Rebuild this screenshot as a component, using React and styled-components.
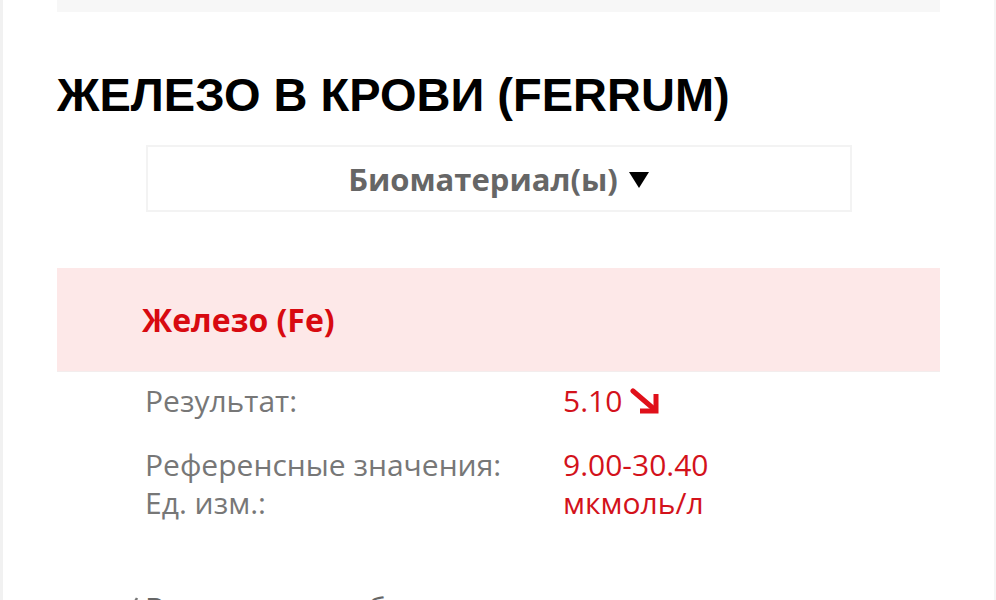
import React from 'react';
import styled, { createGlobalStyle } from 'styled-components';

const GlobalStyle = createGlobalStyle`
  html, body {
    margin: 0;
    padding: 0;
    background: #fff;
  }
  body {
    font-family: 'Open Sans', 'Noto Sans', sans-serif;
  }
`;

const Page = styled.div`
  width: 996px;
  height: 600px;
  box-sizing: border-box;
  overflow: hidden;
  border-left: 3px solid #f1f1f1;
  border-right: 2px solid #f5f5f5;
  padding: 0 54px 0 54px;
`;

const TopBand = styled.div`
  height: 12px;
  background: #f7f7f7;
`;

const Title = styled.h1`
  margin: 55px 0 0;
  font-family: 'Liberation Sans', Arial, sans-serif;
  font-weight: 700;
  font-size: 47px;
  line-height: 56px;
  color: #000;
  white-space: nowrap;
`;

const Dropdown = styled.div`
  width: 706px;
  height: 67px;
  box-sizing: border-box;
  margin: 22px auto 0;
  border: 2px solid #f3f3f3;
  display: flex;
  align-items: center;
  justify-content: center;
  gap: 11px;
  font-weight: 700;
  font-size: 31px;
  color: #666;
`;

const Caret = styled.span`
  width: 0;
  height: 0;
  border-left: 10px solid transparent;
  border-right: 10px solid transparent;
  border-top: 16px solid #000;
  margin-top: 2px;
`;

const TestHeader = styled.div`
  margin-top: 56px;
  height: 104px;
  box-sizing: border-box;
  background: #fde8e8;
  border-bottom: 1px solid #f3eded;
  display: flex;
  align-items: center;
  padding-left: 85px;
  font-weight: 700;
  font-size: 32px;
  color: #d80a10;
`;

const Results = styled.div`
  padding: 10px 0 0 88px;
`;

const Row = styled.div`
  display: grid;
  grid-template-columns: 418px 1fr;
  font-size: 30px;
  line-height: 38px;
  margin-top: ${p => p.$gap || 0}px;
`;

const Label = styled.div`
  color: #777;
`;

const Value = styled.div`
  color: #d3121b;
  display: flex;
  align-items: center;
  gap: 8px;
`;

const Note = styled.div`
  margin-top: 67px;
  padding-left: 60px;
  display: flex;
  align-items: flex-start;
  font-size: 30px;
  line-height: 38px;
  color: #666;
  white-space: nowrap;
`;

const CheckIcon = styled.svg`
  flex: none;
  width: 28px;
  height: 24px;
  margin-top: 8px;
`;

const DownArrow = () => (
  <svg width="30" height="26" viewBox="0 0 30 26">
    <path d="M3 3 L24 21" stroke="#e0101a" strokeWidth="5" strokeLinecap="round" />
    <path d="M26 6 L26 23 L10 23" stroke="#e0101a" strokeWidth="5" fill="none" />
  </svg>
);

export default function App() {
  return (
    <>
      <GlobalStyle />
      <Page>
        <TopBand />
        <Title>ЖЕЛЕЗО В КРОВИ (FERRUM)</Title>
        <Dropdown>
          Биоматериал(ы)
          <Caret />
        </Dropdown>
        <TestHeader>Железо (Fe)</TestHeader>
        <Results>
          <Row>
            <Label>Результат:</Label>
            <Value>
              5.10
              <DownArrow />
            </Value>
          </Row>
          <Row $gap={26}>
            <Label>Референсные значения:</Label>
            <Value>9.00-30.40</Value>
          </Row>
          <Row>
            <Label>Ед. изм.:</Label>
            <Value>мкмоль/л</Value>
          </Row>
        </Results>
        <Note>
          <CheckIcon viewBox="0 0 28 24">
            <path d="M3 14 L9 21 L20 1" stroke="#777" strokeWidth="2.5" fill="none" />
          </CheckIcon>
          Ваш результат был проверен врачом
        </Note>
      </Page>
    </>
  );
}
